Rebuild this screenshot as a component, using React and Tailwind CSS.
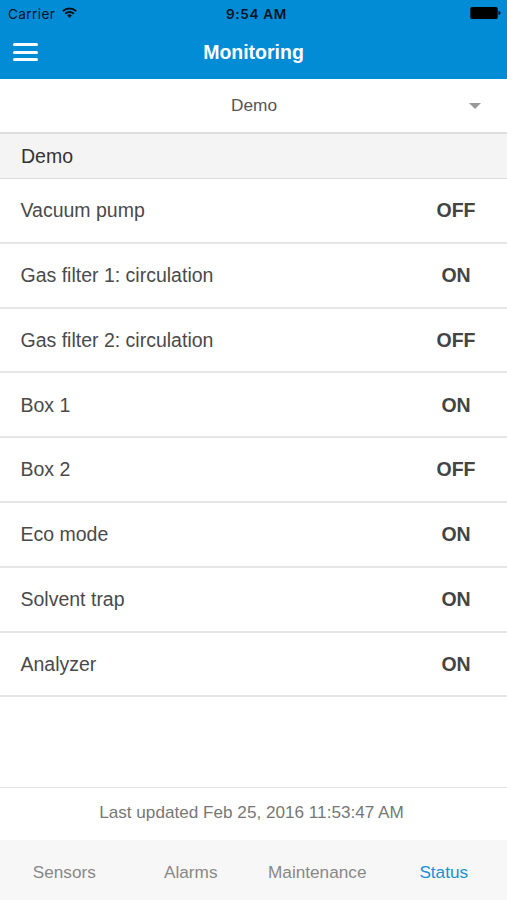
import React, { useState } from 'react';

const items = [
  { name: 'Vacuum pump', on: false },
  { name: 'Gas filter 1: circulation', on: true },
  { name: 'Gas filter 2: circulation', on: false },
  { name: 'Box 1', on: true },
  { name: 'Box 2', on: false },
  { name: 'Eco mode', on: true },
  { name: 'Solvent trap', on: true },
  { name: 'Analyzer', on: true },
];

const tabs = ['Sensors', 'Alarms', 'Maintenance', 'Status'];

function StatusBar() {
  return (
    <div className="grid grid-cols-3 items-center h-[27px] pl-2 pr-[6px] text-[13.6px] text-[#03141f] font-[Inter,sans-serif]">
      <div className="flex items-center gap-[7px]">
        <span className="pt-[2px] tracking-[0.4px]">Carrier</span>
        <svg className="w-[15px] h-[11px] -mt-[2px]" viewBox="0 0 15 11" fill="none" stroke="#04121c" strokeWidth="2">
          <path d="M0.8 4.1a9.6 9.6 0 0 1 13.4 0" />
          <path d="M3.2 6.8a6.2 6.2 0 0 1 8.6 0" />
          <path d="M7.5 11L5.1 8.5a3.4 3.4 0 0 1 4.8 0z" fill="#04121c" stroke="none" />
        </svg>
      </div>
      <span className="pl-1 pt-[2px] text-center font-semibold tracking-[0.65px] whitespace-nowrap">9:54 AM</span>
      <svg className="w-[31px] h-[12px] -mt-px justify-self-end" viewBox="0 0 31 12" fill="#000">
        <rect x="0.3" y="0" width="27.4" height="12" rx="1.5" />
        <path d="M28.5 4c1.4 0.2 2 1 2 2s-0.6 1.8-2 2z" />
      </svg>
    </div>
  );
}

function Header() {
  return (
    <header className="h-[79px] bg-[#028cd5]">
      <StatusBar />
      <div className="grid grid-cols-[60px_1fr_60px] items-center h-[50px]">
        <button className="flex flex-col gap-[4.5px] w-[25px] ml-[13px]" aria-label="Menu">
          <span className="h-[3px] rounded-full bg-white"></span>
          <span className="h-[3px] rounded-full bg-white"></span>
          <span className="h-[3px] rounded-full bg-white"></span>
        </button>
        <h1 className="pt-px text-center text-[19.5px] font-bold text-white">Monitoring</h1>
      </div>
    </header>
  );
}

function App() {
  const [active, setActive] = useState('Status');

  return (
    <div className="flex flex-col h-[900px] bg-white text-[#4a4a4a] font-['Liberation_Sans',Arial,sans-serif]">
      <Header />

      {/* Location select */}
      <div className="grid grid-cols-[60px_1fr_60px] items-center h-[55px] border-b-2 border-[#dedede] text-[17.25px] text-[#555]">
        <span className="col-start-2 pl-px pt-px text-center">Demo</span>
        <svg className="w-3 h-[6px] ml-[22px]" viewBox="0 0 12 6" fill="#999">
          <path d="M0 0h12L6 6z" />
        </svg>
      </div>

      <h2 className="flex items-center h-[45px] px-[21px] pt-px bg-[#f4f4f4] border-b border-[#dcdcdc] text-[19.5px] text-[#333]">
        Demo
      </h2>

      <ul className="flex-1">
        {items.map((item) => (
          <li key={item.name} className="flex items-center h-[64.8px] pt-px pl-[20.5px] border-b-2 border-[#e6e6e6] text-[19.5px]">
            <span className="flex-1">{item.name}</span>
            <span className="w-[102px] text-center font-bold text-[#444]">{item.on ? 'ON' : 'OFF'}</span>
          </li>
        ))}
      </ul>

      <div className="flex items-center justify-center h-[53px] pr-1 pb-[3px] border-t border-[#e2e2e2] text-[17.15px] text-[#777]">
        Last updated Feb 25, 2016 11:53:47 AM
      </div>

      <nav className="flex h-[60px] pt-[5px] pl-px bg-[#f7f7f7] text-[17.2px]">
        {tabs.map((tab) => (
          <button
            key={tab}
            onClick={() => setActive(tab)}
            className={`flex-1 basis-0 ${active === tab ? 'text-[#1a8fd3]' : 'text-[#888]'}`}
          >
            {tab}
          </button>
        ))}
      </nav>
    </div>
  );
}

export default App;
